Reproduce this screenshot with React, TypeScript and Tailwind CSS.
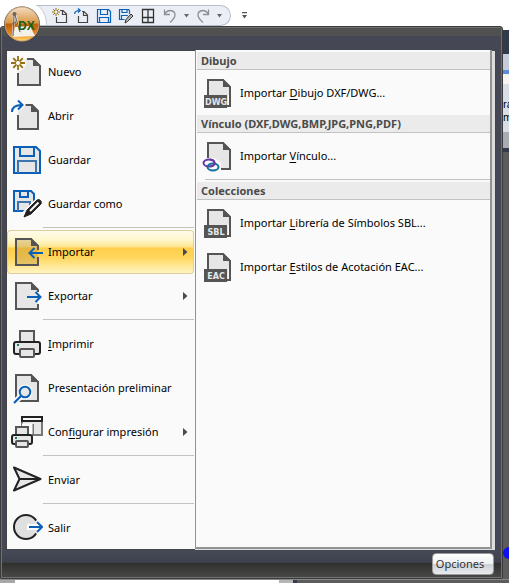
import type { ReactNode } from "react";
import { cva } from "class-variance-authority";
import { clsx } from "clsx";

const PAGE = "#555555";
const FILL = "#e6e6e6";
const BLUE = "#0a5fb8";

interface MenuEntry {
  label: string;
  accessKey?: string;
  icon: ReactNode;
  submenu?: boolean;
  active?: boolean;
}

const Svg = ({ size = 32, children }: { size?: number; children: ReactNode }) => (
  <svg
    width={size}
    height={size}
    viewBox={`0 0 ${size} ${size}`}
    fill="none"
    className="shrink-0"
    aria-hidden="true"
  >
    {children}
  </svg>
);

const NewIcon = () => (
  <Svg>
    <path d="M7 29V3h15l7 7v19z" fill={FILL} />
    <path d="M7 17v12h22V10l-7-7h-6" stroke={PAGE} strokeWidth="2" />
    <path d="M22 2v8h8z" fill={PAGE} />
    <circle cx="7" cy="7" r="8" fill="#fafafa" />
    <path
      d="M7 0v4M7 10v4M0 7h4M10 7h4M2.2 2.2 5 5M9 9l2.8 2.8M2.2 11.8 5 9M9 5l2.8-2.8"
      stroke="#94700f"
      strokeWidth="1.8"
    />
    <circle cx="7" cy="7" r="2.6" stroke="#94700f" strokeWidth="1" />
  </Svg>
);

const OpenIcon = () => (
  <Svg>
    <path d="M7 29V5h14l6 6v18z" fill={FILL} />
    <path d="M7 15v14h20V11l-6-6h-7" stroke={PAGE} strokeWidth="2" />
    <path d="M20 4v8h8z" fill={PAGE} />
    <path d="M1 12C1 7 4 5 11 5M7 .5 11.5 5 7 9.5" stroke="#fafafa" strokeWidth="5" />
    <path d="M1 12C1 7 4 5 11 5M7 .5 11.5 5 7 9.5" stroke={BLUE} strokeWidth="2" />
  </Svg>
);

const SaveIcon = () => (
  <Svg>
    <path d="M3 3h22l4 4v22H3z" fill={FILL} stroke={BLUE} strokeWidth="2" />
    <path d="M9 3v9h14V3" stroke={BLUE} strokeWidth="2" />
    <path d="M7 29V17h18v12" stroke="#3f74ad" strokeWidth="2" />
  </Svg>
);

const SaveAsIcon = () => (
  <Svg>
    <path d="M3 3h17l3 3v17H3z" fill={FILL} stroke={BLUE} strokeWidth="2" />
    <path d="M9 3v6h8V3" stroke={BLUE} strokeWidth="2" />
    <path d="M7 23V14h12v9" stroke="#3f74ad" strokeWidth="2" />
    <path d="M14 28 28 14" stroke="#fafafa" strokeWidth="9" />
    <path d="m13 29 3-7L26 12q2-1 3.5.5t.5 3.5L20 26z" fill="#222" stroke="#222" />
    <path d="m19 23 8.5-8.5" stroke="#fafafa" strokeWidth="2" />
  </Svg>
);

const ImportIcon = () => (
  <Svg>
    <path d="M5 29V3h15l7 7v19z" fill="#a07820" fillOpacity="0.28" />
    <path d="M27 14v-4l-7-7H5v26h22v-8" stroke={PAGE} strokeWidth="2" />
    <path d="M20 2v8h8z" fill={PAGE} />
    <path d="M32 17H19M23.5 12l-5 5 5 5" stroke={BLUE} strokeWidth="2" />
  </Svg>
);

const ExportIcon = () => (
  <Svg>
    <path d="M5 29V3h15l7 7v19z" fill={FILL} />
    <path d="M27 12v-2l-7-7H5v26h22v-5" stroke={PAGE} strokeWidth="2" />
    <path d="M20 2v8h8z" fill={PAGE} />
    <path d="M16 17h13M24.5 12l5 5-5 5" stroke={BLUE} strokeWidth="2" />
  </Svg>
);

const PrintIcon = () => (
  <Svg>
    <path d="M9 14V3h14v11" fill={FILL} stroke={PAGE} strokeWidth="2" />
    <rect x="3" y="14" width="26" height="12" rx="2" fill={FILL} stroke="#222" strokeWidth="2" />
    <rect x="9" y="21" width="14" height="8" rx="1" fill={FILL} stroke={PAGE} strokeWidth="2" />
    <path d="M6 17h2" stroke="#138069" strokeWidth="2" />
  </Svg>
);

const PreviewIcon = () => (
  <Svg>
    <path d="M5 3h15l7 7v19H5z" fill={FILL} stroke={PAGE} strokeWidth="2" />
    <path d="M20 2v8h8z" fill={PAGE} />
    <path d="m3 31 7-7" stroke="#fafafa" strokeWidth="6" />
    <circle cx="14" cy="20" r="7.5" fill="#fafafa" />
    <path d="m3 31 7-7" stroke={BLUE} strokeWidth="2.2" />
    <circle cx="14" cy="20" r="5.3" fill={FILL} stroke={BLUE} strokeWidth="2" />
  </Svg>
);

const PageSetupIcon = () => (
  <Svg>
    <path d="M11 4v5h11v10h9V4" fill={FILL} stroke="#777" strokeWidth="2" />
    <path d="M11 9h9v9" stroke="#fafafa" strokeWidth="3" />
    <path d="M11 1h20v4H11z" fill="#fafafa" stroke="#222" strokeWidth="2" />
    <path d="M5 19v-8h12v8" fill={FILL} stroke={PAGE} strokeWidth="2" />
    <rect x="1" y="19" width="20" height="9" rx="2" fill={FILL} stroke="#222" strokeWidth="2" />
    <rect x="5" y="25" width="12" height="6" rx="1" fill={FILL} stroke={PAGE} strokeWidth="2" />
    <path d="M4 22h2" stroke="#138069" strokeWidth="2" />
  </Svg>
);

const SendIcon = () => (
  <Svg>
    <path
      d="M3 3.5 29.5 15 3 26.5 8.5 15zM8.5 15h20"
      fill={FILL}
      stroke="#222"
      strokeWidth="2"
      strokeLinejoin="round"
    />
  </Svg>
);

const ExitIcon = () => (
  <Svg>
    <circle cx="15" cy="15" r="12" fill="#e0e0e0" stroke="#222" strokeWidth="2" />
    <path d="M16 15h15M26 8l6 7-6 7" stroke="#fafafa" strokeWidth="6" />
    <path d="M18 15h13M26 10l5 5-5 5" stroke={BLUE} strokeWidth="2" />
  </Svg>
);

const FileTypeIcon = ({ type }: { type: string }) => (
  <Svg>
    <path d="M6 3h15l7 7v19H6z" fill={FILL} stroke={PAGE} strokeWidth="2" />
    <path d="M21 2v8h8z" fill={PAGE} />
    <path d="M26 18h1v10h-1z" fill="#fafafa" />
    <path d="M2 18h23v13H2z" fill={PAGE} />
    <text
      x="14"
      y="28"
      textAnchor="middle"
      fill="#e6e6e6"
      className="font-['DejaVu_Sans'] text-[8px] font-bold"
    >
      {type}
    </text>
  </Svg>
);

const LinkIcon = () => (
  <Svg>
    <path d="M6 3h15l7 7v19H6z" fill={FILL} stroke={PAGE} strokeWidth="2" />
    <path d="M21 2v8h8z" fill={PAGE} />
    <path d="M0 18h13l6 5v9H0z" fill="#fafafa" />
    <ellipse cx="7" cy="23" rx="5.5" ry="3.5" stroke="#6b35a8" strokeWidth="2" />
    <ellipse cx="11" cy="27" rx="5.5" ry="3.5" stroke="#13719c" strokeWidth="2" />
    <path d="M8 19.600q4.500.4 4.500 3.400t-4 3.400" stroke="#6b35a8" strokeWidth="2" />
  </Svg>
);

const mainGroups: MenuEntry[][] = [
  [
    { label: "Nuevo", icon: <NewIcon /> },
    { label: "Abrir", icon: <OpenIcon /> },
    { label: "Guardar", icon: <SaveIcon /> },
    { label: "Guardar como", icon: <SaveAsIcon /> },
  ],
  [
    { label: "Importar", icon: <ImportIcon />, submenu: true, active: true },
    { label: "Exportar", icon: <ExportIcon />, submenu: true },
  ],
  [
    { label: "Imprimir", accessKey: "I", icon: <PrintIcon /> },
    { label: "Presentación preliminar", icon: <PreviewIcon /> },
    { label: "Configurar impresión", accessKey: "f", icon: <PageSetupIcon />, submenu: true },
  ],
  [{ label: "Enviar", icon: <SendIcon /> }],
  [{ label: "Salir", icon: <ExitIcon /> }],
];

const importSections: { title: string; divider?: boolean; items: MenuEntry[] }[] = [
  {
    title: "Dibujo",
    items: [
      { label: "Importar Dibujo DXF/DWG...", accessKey: "D", icon: <FileTypeIcon type="DWG" /> },
    ],
  },
  {
    title: "Vínculo (DXF,DWG,BMP,JPG,PNG,PDF)",
    divider: true,
    items: [{ label: "Importar Vínculo...", accessKey: "V", icon: <LinkIcon /> }],
  },
  {
    title: "Colecciones",
    items: [
      {
        label: "Importar Librería de Símbolos SBL...",
        accessKey: "L",
        icon: <FileTypeIcon type="SBL" />,
      },
      {
        label: "Importar Estilos de Acotación EAC...",
        accessKey: "E",
        icon: <FileTypeIcon type="EAC" />,
      },
    ],
  },
];

const Label = ({ text, accessKey }: { text: string; accessKey?: string }) => {
  const at = accessKey ? text.indexOf(accessKey) : -1;
  if (at < 0) return <span>{text}</span>;
  return (
    <span>
      {text.slice(0, at)}
      <u className="underline-offset-2">{text[at]}</u>
      {text.slice(at + 1)}
    </span>
  );
};

const row = cva("flex h-11 w-full items-center whitespace-nowrap text-left", {
  variants: {
    active: {
      true: "rounded-sm bg-[linear-gradient(#fffdf0_0%,#fff6c8_24%,#ffe690_38%,#ffcf4c_41%,#ffd65c_62%,#fff7c8_100%)] shadow-[inset_0_0_0_1px_#e0cf9a]",
      false: "hover:bg-amber-50",
    },
  },
  defaultVariants: { active: false },
});

const MainItem = ({ entry }: { entry: MenuEntry }) => (
  <button
    type="button"
    role="menuitem"
    aria-haspopup={entry.submenu ? "menu" : undefined}
    className={clsx(row({ active: entry.active }), "gap-[5px] pr-1.5 pl-1")}
  >
    {entry.icon}
    <Label text={entry.label} accessKey={entry.accessKey} />
    {entry.submenu && (
      <svg width="5" height="8" viewBox="0 0 5 8" className="ml-auto" aria-hidden="true">
        <path d="M0 0v8l4.500-4z" fill="#4a4a4a" />
      </svg>
    )}
  </button>
);

const ToolButton = ({ label, children }: { label: string; children: ReactNode }) => (
  <button type="button" aria-label={label} title={label}>
    {children}
  </button>
);

const Caret = ({ label }: { label: string }) => (
  <ToolButton label={label}>
    <svg width="5" height="4" viewBox="0 0 5 4">
      <path d="M0 0h5L2.500 3.500z" fill="#666" />
    </svg>
  </ToolButton>
);

const QuickAccess = () => (
  <div className="relative flex h-[21px] w-fit items-center overflow-hidden rounded-r-full border border-l-0 border-[#b7bdca] bg-[#ebeff5] pr-2 pl-4">
    {/* white ring that keeps the bar clear of the orb */}
    <span className="absolute -top-[7px] -left-[39px] size-[50px] rounded-full border border-[#c3c8d3] bg-white" />
    <div className="relative flex items-center gap-1.5">
      <ToolButton label="Nuevo">
        <Svg size={16}>
          <path d="M4.500 9v5.500h10V6l-3.500-3.500H8" stroke="#444" strokeWidth="1.200" />
          <path d="M10.500 2.500V6.500h4" stroke="#444" strokeWidth="1.200" />
          <path
            d="M4 0v8M0 4h8M1.200 1.200l5.600 5.600M1.200 6.800l5.600-5.600"
            stroke="#94700f"
          />
          <circle cx="4" cy="4" r="1.200" fill="#ebeff5" />
        </Svg>
      </ToolButton>
      <ToolButton label="Abrir">
        <Svg size={16}>
          <path d="M4.500 8v6.500h9V7L10 3.500H8" stroke="#444" strokeWidth="1.200" />
          <path d="M9.500 3.500V7.500h4" stroke="#444" strokeWidth="1.200" />
          <path d="M.6 6C.6 3.500 2 2.500 6 2.500M4 .5l2.200 2L4 4.500" stroke={BLUE} strokeWidth="1.200" />
        </Svg>
      </ToolButton>
      <ToolButton label="Guardar">
        <Svg size={16}>
          <path
            d="M1.500 1.500h11l2 2v11h-13zM4.500 1.500v5h7v-5M3.500 14.500v-5h9v5"
            stroke={BLUE}
            strokeWidth="1.200"
          />
        </Svg>
      </ToolButton>
      <ToolButton label="Guardar como">
        <Svg size={16}>
          <path
            d="M1.500 1.500h9l1 1v9h-10zM4 1.500v3h5v-3M3.500 11.500v-4h6v4"
            stroke={BLUE}
            strokeWidth="1.200"
          />
          <path d="m8 13 6-6" stroke="#ebeff5" strokeWidth="5" />
          <path d="m7 15 1-3.500L13 6l2 2-5.500 5.500z" fill="#b5b5b5" stroke="#333" />
        </Svg>
      </ToolButton>
      <ToolButton label="Ventanas">
        <Svg size={16}>
          <path d="M2.500 1.500h11v13h-11zM8 1.500v13M2.500 9.500h11" stroke="#333" strokeWidth="1.300" />
        </Svg>
      </ToolButton>
      <ToolButton label="Deshacer">
        <Svg size={16}>
          <path
            d="M2.500 1.500v5H8M2.500 6.500Q4.500 2.500 8.500 2.500q4.500.5 4.500 4.500 0 3-5 7.500"
            stroke="#8c9099"
            strokeWidth="1.300"
          />
        </Svg>
      </ToolButton>
      <Caret label="Opciones de deshacer" />
      <ToolButton label="Rehacer">
        <Svg size={16}>
          <path
            d="M13.500 1.500v5H8M13.500 6.500Q11.500 2.500 7.500 2.500 3 3 3 7q0 3 5 7.500"
            stroke="#8c9099"
            strokeWidth="1.300"
          />
        </Svg>
      </ToolButton>
      <Caret label="Opciones de rehacer" />
    </div>
  </div>
);

const AppOrb = () => (
  <button
    type="button"
    aria-label="Menú de la aplicación"
    className="absolute top-[5px] left-[3px] z-10 rounded-full"
  >
    <svg width="38" height="38" viewBox="0 0 38 38">
      <defs>
        <linearGradient id="orb" x1="0" y1="0" x2="0" y2="1">
          <stop offset="0" stopColor="#f3dcc0" />
          <stop offset="0.45" stopColor="#dd9a4a" />
          <stop offset="0.52" stopColor="#bf5f08" />
          <stop offset="0.8" stopColor="#ea861a" />
          <stop offset="1" stopColor="#ffd76a" />
        </linearGradient>
      </defs>
      <circle cx="19" cy="19.500" r="18" fill="#4c4239" />
      <circle cx="19" cy="19" r="17.500" fill="#bda184" />
      <circle cx="19" cy="19" r="16.500" fill="url(#orb)" />
      <path d="m12 22 15-1 5 10-22 1z" fill="#f4f1ea" />
      <path d="m11 9-1 22M12 9l6 20" stroke="#e8e8e8" strokeWidth="2" />
      <path d="m11 10-1 21M12 10l5 17M9 19l4-2" stroke="#5c5c5c" />
      <circle cx="11.500" cy="9" r="2" fill="#666" />
      <text
        x="15"
        y="25"
        fill="#176019"
        className="font-['Liberation_Sans'] text-[12px] font-bold"
      >
        DX
      </text>
    </svg>
  </button>
);

const ImportPane = () => (
  <div
    role="menu"
    aria-label="Importar"
    className="min-w-0 flex-1 border-r-2 border-b-2 border-l border-[#929292] bg-[#fafafa] pt-0.5 pl-px"
  >
    {importSections.map((section) => (
      <section key={section.title}>
        <h2 className="mb-px flex h-[18px] items-center border-b border-[#c2c2c2] bg-[#ebebeb] px-1 font-bold text-[#4a4a4a]">
          {section.title}
        </h2>
        {section.items.map((item) => (
          <button
            key={item.label}
            type="button"
            role="menuitem"
            className={clsx(row(), "gap-1.5 pl-[5px]")}
          >
            {item.icon}
            <Label text={item.label} accessKey={item.accessKey} />
          </button>
        ))}
        {section.divider && <hr className="mt-px mb-0.5 ml-2 border-[#c2c2c2]" />}
      </section>
    ))}
  </div>
);

/* Edge of the drawing window that shows beside the open menu. */
const DrawingEdge = () => (
  <div className="flex w-1.5 shrink-0 flex-col overflow-hidden bg-[#5c5c5c]">
    <div className="h-1 bg-white" />
    <div className="h-6 bg-[#313b4b]" />
    <div className="h-4 bg-[#c5ccd9]" />
    <div className="h-1 bg-[#5c8bdc]" />
    <div className="h-2.5 bg-[#f8f5f0]" />
    <div className="flex h-12 flex-col justify-end bg-[#d9dfe8] pb-2 font-['Liberation_Sans'] leading-[13px] text-black">
      <span>ra</span>
      <span>m</span>
    </div>
    <div className="h-4 bg-[#a9acb1]" />
    <div className="h-1 bg-[#313b4b]" />
    <div className="mt-auto mb-5 h-3 w-3 rounded-full bg-[#1010f0]" />
  </div>
);

export default function App() {
  return (
    <div className="relative flex min-h-screen flex-col bg-white font-['Noto_Sans','Open_Sans',sans-serif] text-[11px] leading-4 text-black">
      <AppOrb />
      <header className="flex h-[26px] items-end gap-2.5 pl-9">
        <QuickAccess />
        <div className="flex h-[21px] items-center">
          <ToolButton label="Personalizar barra">
            <svg width="7" height="7" viewBox="0 0 7 7">
              <path d="M1 0h5v1.300H1zM1 3h5L3.500 6.500z" fill="#555" />
            </svg>
          </ToolButton>
        </div>
      </header>

      <div className="flex">
        <div className="flex min-w-0 flex-1 flex-col rounded-t-[3px] border border-[#3b3b3b] bg-[#454854] shadow-[inset_0_0_0_1px_#707070]">
          <div className="m-px mb-0 h-2 bg-[#515151]" />
          <div className="h-3.5" />

          <div className="mr-1.5 ml-[5px] flex border-x border-[#444] bg-[#fafafa] shadow-[inset_0_1px_0_#444,inset_0_-1px_0_#444]">
            <nav role="menu" aria-label="Archivo" className="w-[188px] shrink-0 pr-px">
              {mainGroups.map((group, i) => (
                <div key={group[0].label}>
                  {i > 0 && <hr className="mt-px mb-0.5 ml-9 border-[#c2c2c2]" />}
                  {group.map((entry) => (
                    <MainItem key={entry.label} entry={entry} />
                  ))}
                </div>
              ))}
            </nav>
            <div className="flex flex-1 border-t border-[#444] bg-[#dcdcdc] pr-[3px] pb-px">
              <div className="-mt-px flex min-w-0 flex-1">
                <ImportPane />
              </div>
            </div>
          </div>

          <footer className="mx-px mb-px flex h-[27px] items-start justify-end bg-[linear-gradient(#464a58_0%,#3d414c_46%,#2f2f2d_48%,#484848_100%)] pt-[3px] pr-[7px]">
            <button
              type="button"
              className="h-[22px] w-[62px] rounded-sm border border-[#9a9a9a] bg-[linear-gradient(#ffffff_0%,#eef0f2_48%,#cdd0d4_52%,#e9ebee_100%)] pr-1.5 text-[#333]"
            >
              Opciones
            </button>
          </footer>
        </div>
        <DrawingEdge />
      </div>

      <div className="flex min-h-1 flex-1 border-t border-[#888]">
        <div className="w-[15px] bg-[#a8a8a8]" />
        <div className="flex-1 bg-white" />
        <div className="w-3.5 bg-[#b5b5b5]" />
        <div className="w-1 bg-[#313b4b]" />
        <div className="w-[212px] bg-[#5c5c5c]" />
      </div>
    </div>
  );
}
